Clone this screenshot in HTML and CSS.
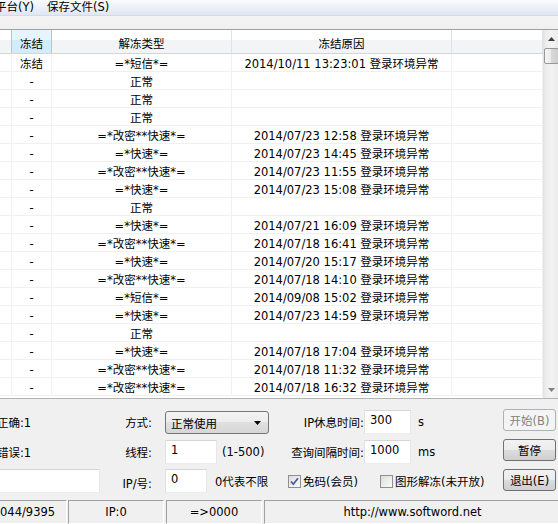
FILE: index.html
```html
<!DOCTYPE html>
<html lang="zh-CN">
<head>
<meta charset="utf-8">
<title>冻结查询</title>
<link rel="stylesheet" href="styles.css">
</head>
<body>
<div class="app">
  <div class="menubar">
    <span class="menu first">平台(Y)</span>
    <span class="menu">保存文件(S)</span>
  </div>
  <div class="toolstrip"></div>

  <div class="listview">
    <div class="lv-main">
      <div class="lv-head">
        <div class="hcell edge"></div>
        <div class="hcell hot">冻结</div>
        <div class="hcell">解冻类型</div>
        <div class="hcell">冻结原因</div>
        <div class="hcell"></div>
      </div>
      <div class="lv-row"><div></div><div>冻结</div><div>=*短信*=</div><div>2014/10/11 13:23:01 登录环境异常</div><div></div></div>
      <div class="lv-row"><div></div><div>-</div><div>正常</div><div></div><div></div></div>
      <div class="lv-row"><div></div><div>-</div><div>正常</div><div></div><div></div></div>
      <div class="lv-row"><div></div><div>-</div><div>正常</div><div></div><div></div></div>
      <div class="lv-row"><div></div><div>-</div><div>=*改密**快速*=</div><div>2014/07/23 12:58 登录环境异常</div><div></div></div>
      <div class="lv-row"><div></div><div>-</div><div>=*快速*=</div><div>2014/07/23 14:45 登录环境异常</div><div></div></div>
      <div class="lv-row"><div></div><div>-</div><div>=*改密**快速*=</div><div>2014/07/23 11:55 登录环境异常</div><div></div></div>
      <div class="lv-row"><div></div><div>-</div><div>=*快速*=</div><div>2014/07/23 15:08 登录环境异常</div><div></div></div>
      <div class="lv-row"><div></div><div>-</div><div>正常</div><div></div><div></div></div>
      <div class="lv-row"><div></div><div>-</div><div>=*快速*=</div><div>2014/07/21 16:09 登录环境异常</div><div></div></div>
      <div class="lv-row"><div></div><div>-</div><div>=*改密**快速*=</div><div>2014/07/18 16:41 登录环境异常</div><div></div></div>
      <div class="lv-row"><div></div><div>-</div><div>=*快速*=</div><div>2014/07/20 15:17 登录环境异常</div><div></div></div>
      <div class="lv-row"><div></div><div>-</div><div>=*改密**快速*=</div><div>2014/07/18 14:10 登录环境异常</div><div></div></div>
      <div class="lv-row"><div></div><div>-</div><div>=*短信*=</div><div>2014/09/08 15:02 登录环境异常</div><div></div></div>
      <div class="lv-row"><div></div><div>-</div><div>=*快速*=</div><div>2014/07/23 14:59 登录环境异常</div><div></div></div>
      <div class="lv-row"><div></div><div>-</div><div>正常</div><div></div><div></div></div>
      <div class="lv-row"><div></div><div>-</div><div>=*快速*=</div><div>2014/07/18 17:04 登录环境异常</div><div></div></div>
      <div class="lv-row"><div></div><div>-</div><div>=*改密**快速*=</div><div>2014/07/18 11:32 登录环境异常</div><div></div></div>
      <div class="lv-row"><div></div><div>-</div><div>=*改密**快速*=</div><div>2014/07/18 16:32 登录环境异常</div><div></div></div>
    </div>
    <div class="vscroll">
      <div class="sb-btn"><svg width="7" height="4" viewBox="0 0 7 4"><path d="M0 4 L3.5 0 L7 4 Z" fill="#404040"/></svg></div>
      <div class="sb-track"><div class="sb-thumb"></div></div>
      <div class="sb-btn"><svg width="7" height="4" viewBox="0 0 7 4"><path d="M0 0 L3.5 4 L7 0 Z" fill="#808080"/></svg></div>
    </div>
  </div>

  <div class="panel">
    <div class="stat">正确:1</div>
    <div class="lbl">方式:</div>
    <div class="ctl"><div class="combo"><span>正常使用</span><svg width="7" height="4" viewBox="0 0 7 4"><path d="M0 0 L3.5 4 L7 0 Z" fill="#000"/></svg></div></div>
    <div class="lbl">IP休息时间:</div>
    <div class="ctl2"><input class="tb tb-sm" type="text" value="300"><span class="unit">s</span></div>
    <button class="btn" disabled>开始(B)</button>

    <div class="stat">错误:1</div>
    <div class="lbl">线程:</div>
    <div class="ctl"><input class="tb tb-md" type="text" value="1"><span class="hint">(1-500)</span></div>
    <div class="lbl">查询间隔时间:</div>
    <div class="ctl2"><input class="tb tb-sm" type="text" value="1000"><span class="unit">ms</span></div>
    <button class="btn">暂停</button>

    <div class="stat"><input class="tb tb-wide" type="text" value=""></div>
    <div class="lbl lbl-low">IP/号:</div>
    <div class="ctl"><input class="tb tb-xs" type="text" value="0"><span class="hint hint-wide">0代表不限</span></div>
    <div class="checks">
      <span class="chk"><span class="box"><svg width="11" height="11" viewBox="0 0 11 11"><path d="M2 5.5 L4.3 8.2 L9 2.2" fill="none" stroke="#4b5ea3" stroke-width="1.8"/></svg></span>免码(会员)</span>
      <span class="chk"><span class="box"></span>图形解冻(未开放)</span>
    </div>
    <button class="btn">退出(E)</button>
  </div>

  <div class="statusbar">
    <div class="sb-cell c1">044/9395</div>
    <div class="sb-cell c2">IP:0</div>
    <div class="sb-cell c3">=&gt;0000</div>
    <div class="sb-cell c4">http://www.softword.net</div>
  </div>
</div>
</body>
</html>
```

FILE: styles.css
```css
html, body {
  margin: 0;
  padding: 0;
}
body {
  background: #f0f0f0;
  font-family: "DejaVu Sans", "Noto Sans CJK SC", sans-serif;
  font-size: 11.5px;
  color: #000;
  width: 558px;
  height: 524px;
  overflow: hidden;
}
.app {
  display: flex;
  flex-direction: column;
  width: 558px;
  height: 524px;
  overflow: hidden;
}

/* menu */
.menubar {
  height: 15px;
  flex-shrink: 0;
  display: flex;
  align-items: center;
  border-bottom: 1px solid #d3dbe8;
  background: linear-gradient(#f9fbfd, #dfe7f3);
  white-space: nowrap;
}
.menu {
  padding: 0 6px 0 7px;
  line-height: 15px;
}
.menu.first {
  margin-left: -12px;
}
.toolstrip {
  height: 13px;
  flex-shrink: 0;
  border-bottom: 1px solid #a0a0a0;
  background: linear-gradient(#f5f5f5, #efefef);
}

/* list view */
.listview {
  display: flex;
  height: 368px;
  flex-shrink: 0;
  border-bottom: 1px solid #b4b4b4;
}
.lv-main {
  width: 543px;
  flex-shrink: 0;
  background: #fff;
  overflow: hidden;
}
.lv-head {
  display: grid;
  grid-template-columns: 11px 41px 180px 220px 91px;
  height: 23px;
  border-bottom: 1px solid #d5d5d5;
  background: linear-gradient(#ffffff 0, #ffffff 45%, #f3f4f6 45%, #f3f4f6 100%);
}
.hcell {
  box-sizing: border-box;
  border-right: 1px solid #e0e2e5;
  display: flex;
  align-items: center;
  justify-content: center;
  padding-top: 2px;
  white-space: nowrap;
}
.hcell.edge {
  border-right: 0;
}
.hcell.hot {
  border-left: 1px solid #93d1f1;
  border-right: 1px solid #93d1f1;
  background: linear-gradient(#e6f5fd 0, #e6f5fd 45%, #d3ecf9 45%, #d3ecf9 100%);
}
.lv-row {
  display: grid;
  grid-template-columns: 12px 40px 180px 220px 91px;
  grid-template-rows: 17px;
  height: 17px;
  border-bottom: 1px solid #f0f0f0;
}
.lv-row > div {
  box-sizing: border-box;
  border-right: 1px solid #f0f0f0;
  text-align: center;
  line-height: 14px;
  padding-top: 3px;
  white-space: nowrap;
  overflow: hidden;
}

/* scrollbar */
.vscroll {
  width: 17px;
  flex-shrink: 0;
  display: flex;
  flex-direction: column;
  background: linear-gradient(to right, #e2e2e2, #ececec 15%, #f3f3f3 50%, #ececec 85%, #e2e2e2);
}
.sb-btn {
  height: 17px;
  flex-shrink: 0;
  display: flex;
  align-items: center;
  justify-content: center;
}
.sb-track {
  flex: 1;
}
.sb-thumb {
  margin: 1px 1px 0;
  height: 16px;
  box-sizing: border-box;
  border: 1px solid #979797;
  border-radius: 2px;
  background: linear-gradient(to right, #f5f5f5, #e9e9e9 50%, #d9d9d9 50%, #cecece);
}

/* bottom panel */
.panel {
  height: 99px;
  flex-shrink: 0;
  box-sizing: border-box;
  padding-top: 10px;
  display: grid;
  grid-template-columns: 110px 42px 128px 84px 139px 53px;
  grid-template-rows: 25px 25px 24px;
  row-gap: 5px;
  align-items: center;
  white-space: nowrap;
}
.stat {
  margin-left: -3px;
}
.lbl {
  text-align: right;
}
.lbl-low {
  padding-top: 4px;
}
.ctl {
  display: flex;
  align-items: center;
  margin-left: 13px;
  align-self: stretch;
}
.ctl2 {
  display: flex;
  align-items: center;
  align-self: stretch;
}
.combo {
  align-self: flex-end;
  width: 104px;
  height: 23px;
  box-sizing: border-box;
  display: flex;
  align-items: center;
  justify-content: space-between;
  padding: 0 7px 0 5px;
  border: 1px solid #767676;
  border-radius: 3px;
  background: linear-gradient(#f3f3f3, #ececec 50%, #e0e0e0 50%, #d6d6d6);
}
.tb {
  box-sizing: border-box;
  height: 24px;
  margin: 0;
  padding: 0 5px 4px;
  border: 1px solid;
  border-color: #d6d6d6 #e6e6e6 #ededed #e2e2e2;
  background: #fff;
  font-family: "DejaVu Sans", "Noto Sans CJK SC", sans-serif;
  font-size: 11.5px;
  color: #000;
  outline: none;
}
.tb-sm { width: 47px; }
.tb-md { width: 52px; }
.tb-xs { width: 42px; }
.tb-wide {
  width: 102px;
  margin-left: 1px;
  display: block;
}
.unit {
  margin-left: 7px;
}
.hint {
  margin-left: 5px;
}
.hint-wide {
  margin-left: 8px;
}
.checks {
  grid-column: 4 / 6;
  display: flex;
  align-items: center;
  gap: 22px;
  padding-left: 8px;
}
.chk {
  display: inline-flex;
  align-items: center;
  gap: 2px;
}
.box {
  width: 13px;
  height: 13px;
  box-sizing: border-box;
  border: 1px solid #8f8f8f;
  background: linear-gradient(135deg, #dcdcdc, #f2f2f2 70%, #fafafa);
  display: inline-flex;
  align-items: center;
  justify-content: center;
}
.btn {
  align-self: start;
  width: 53px;
  height: 22px;
  padding: 0;
  box-sizing: border-box;
  border: 1px solid #707070;
  border-radius: 3px;
  background: linear-gradient(#f2f2f2, #ebebeb 50%, #dddddd 50%, #cfcfcf);
  font-family: "DejaVu Sans", "Noto Sans CJK SC", sans-serif;
  font-size: 11.5px;
  color: #000;
}
.btn:disabled {
  border-color: #adb2b5;
  background: #f4f4f4;
  color: #838383;
}

/* status bar */
.statusbar {
  height: 26px;
  flex-shrink: 0;
  box-sizing: border-box;
  padding-top: 2px;
  display: flex;
  white-space: nowrap;
}
.sb-cell {
  box-sizing: border-box;
  border: 1px solid;
  border-color: #a0a0a0 #ffffff #ffffff #a0a0a0;
  display: flex;
  align-items: center;
  justify-content: center;
  padding-bottom: 1px;
}
.c1 {
  width: 70px;
  margin-left: -3px;
  justify-content: flex-start;
  padding-left: 2px;
}
.c2 {
  width: 96px;
  margin-left: 1px;
}
.c3 {
  width: 96px;
  margin-left: 2px;
}
.c4 {
  flex: 1;
  margin-left: 2px;
  margin-right: -3px;
}
```
